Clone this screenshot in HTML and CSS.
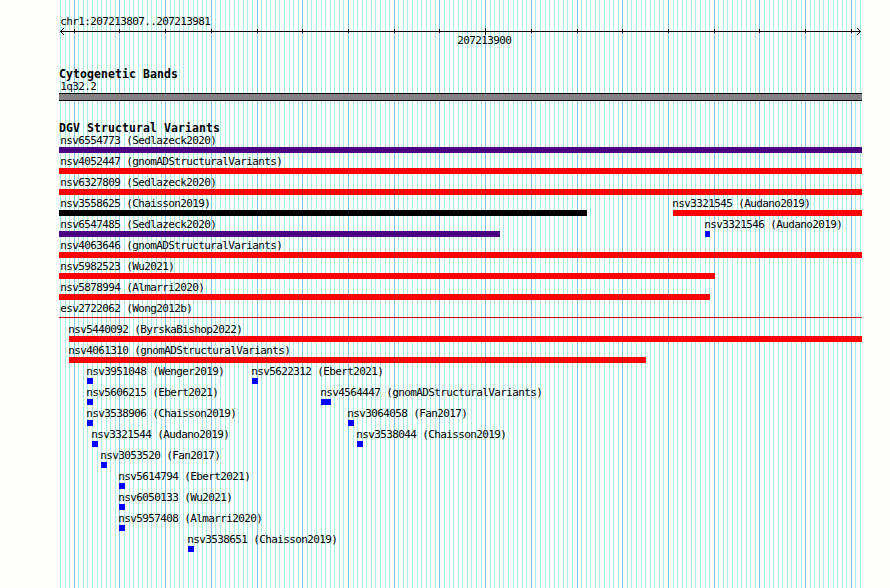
FILE: index.html
```
<!DOCTYPE html>
<html lang="en">
<head>
  <meta charset="UTF-8">
  <title>chr1:207213807..207213981</title>
  <link rel="stylesheet" href="styles.css">
</head>
<body>
  <div class="browser">

    <!-- Scale -->
    <div class="scale">
      <div class="region">chr1:207213807..207213981</div>
      <svg class="ruler" width="803" height="8" viewBox="59 28 803 8" shape-rendering="crispEdges">
        <path class="stroke" d="M60 31.5H861M74.5 29v4M119.5 29v4M165.5 29v4M211.5 29v4M257.5 29v4M302.5 29v4M348.5 29v4M394.5 29v4M439.5 29v4M485.5 28v7M531.5 29v4M577.5 29v4M622.5 29v4M668.5 29v4M714.5 29v4M759.5 29v4M805.5 29v4M851.5 29v4"/>
        <path d="M60 31h1v1h-1zM61 30h1v1h-1zM62 29h1v1h-1zM63 28h1v1h-1zM61 32h1v1h-1zM62 33h1v1h-1zM63 34h1v1h-1z"/>
        <path d="M860 31h1v1h-1zM859 30h1v1h-1zM858 29h1v1h-1zM857 28h1v1h-1zM859 32h1v1h-1zM858 33h1v1h-1zM857 34h1v1h-1z"/>
      </svg>
      <div class="position">207213900</div>
    </div>

    <!-- Cytogenetic bands -->
    <div class="track bands">
      <h2>Cytogenetic Bands</h2>
      <div class="band-label">1q32.2</div>
      <div class="band"></div>
    </div>

    <!-- Structural variants -->
    <div class="track variants">
      <h2>DGV Structural Variants</h2>
      <div class="row">
        <div class="feature full"><span>nsv6554773 (Sedlazeck2020)</span><i class="bar inversion" style="width:803px"></i></div>
      </div>
      <div class="row">
        <div class="feature full"><span>nsv4052447 (gnomADStructuralVariants)</span><i class="bar loss" style="width:803px"></i></div>
      </div>
      <div class="row">
        <div class="feature full"><span>nsv6327809 (Sedlazeck2020)</span><i class="bar loss" style="width:803px"></i></div>
      </div>
      <div class="row">
        <div class="feature full"><span>nsv3558625 (Chaisson2019)</span><i class="bar complex" style="width:528px"></i></div>
        <div class="feature" style="margin-left:614px"><span>nsv3321545 (Audano2019)</span><i class="bar loss" style="width:189px"></i></div>
      </div>
      <div class="row">
        <div class="feature full"><span>nsv6547485 (Sedlazeck2020)</span><i class="bar inversion" style="width:441px"></i></div>
        <div class="feature" style="margin-left:646px"><span>nsv3321546 (Audano2019)</span><i class="bar gain" style="width:5px"></i></div>
      </div>
      <div class="row">
        <div class="feature full"><span>nsv4063646 (gnomADStructuralVariants)</span><i class="bar loss" style="width:803px"></i></div>
      </div>
      <div class="row">
        <div class="feature full"><span>nsv5982523 (Wu2021)</span><i class="bar loss" style="width:656px"></i></div>
      </div>
      <div class="row">
        <div class="feature full"><span>nsv5878994 (Almarri2020)</span><i class="bar loss" style="width:651px"></i></div>
      </div>
      <div class="row">
        <div class="feature full"><span>esv2722062 (Wong2012b)</span><i class="bar thin" style="width:803px"></i></div>
      </div>
      <div class="row">
        <div class="feature" style="margin-left:10px"><span>nsv5440092 (ByrskaBishop2022)</span><i class="bar loss" style="width:793px"></i></div>
      </div>
      <div class="row">
        <div class="feature" style="margin-left:10px"><span>nsv4061310 (gnomADStructuralVariants)</span><i class="bar loss" style="width:577px"></i></div>
      </div>
      <div class="row">
        <div class="feature" style="margin-left:28px"><span>nsv3951048 (Wenger2019)</span><i class="bar gain"></i></div>
        <div class="feature" style="margin-left:193px"><span>nsv5622312 (Ebert2021)</span><i class="bar gain"></i></div>
      </div>
      <div class="row">
        <div class="feature" style="margin-left:28px"><span>nsv5606215 (Ebert2021)</span><i class="bar gain"></i></div>
        <div class="feature" style="margin-left:262px"><span>nsv4564447 (gnomADStructuralVariants)</span><i class="bar gain" style="width:10px"></i></div>
      </div>
      <div class="row">
        <div class="feature" style="margin-left:28px"><span>nsv3538906 (Chaisson2019)</span><i class="bar gain"></i></div>
        <div class="feature" style="margin-left:289px"><span>nsv3064058 (Fan2017)</span><i class="bar gain"></i></div>
      </div>
      <div class="row">
        <div class="feature" style="margin-left:33px"><span>nsv3321544 (Audano2019)</span><i class="bar gain"></i></div>
        <div class="feature" style="margin-left:298px"><span>nsv3538044 (Chaisson2019)</span><i class="bar gain"></i></div>
      </div>
      <div class="row">
        <div class="feature" style="margin-left:42px"><span>nsv3053520 (Fan2017)</span><i class="bar gain"></i></div>
      </div>
      <div class="row">
        <div class="feature" style="margin-left:60px"><span>nsv5614794 (Ebert2021)</span><i class="bar gain"></i></div>
      </div>
      <div class="row">
        <div class="feature" style="margin-left:60px"><span>nsv6050133 (Wu2021)</span><i class="bar gain"></i></div>
      </div>
      <div class="row">
        <div class="feature" style="margin-left:60px"><span>nsv5957408 (Almarri2020)</span><i class="bar gain"></i></div>
      </div>
      <div class="row">
        <div class="feature" style="margin-left:129px"><span>nsv3538651 (Chaisson2019)</span><i class="bar gain"></i></div>
      </div>
    </div>

  </div>
</body>
</html>
```
FILE: styles.css
```
* {
  box-sizing: border-box;
}

body {
  margin: 0;
  background: #fdfffc;
  color: #000;
  font-family: "DejaVu Sans Mono", monospace;
  font-size: 11px;
  line-height: 14px;
  letter-spacing: -0.622px;
  overflow: hidden;
}

.browser {
  --minor: #a5ecea;
  --major: #7cc5ee;
  width: 803px;
  height: 588px;
  margin-left: 59px;
  padding-top: 15px;
  /* one line per base, darker every ten bases (320px = 70 bases) */
  background:
    repeating-linear-gradient(90deg,
      transparent 0 14px, var(--major) 14px 15px,
      transparent 15px 59px, var(--major) 59px 60px,
      transparent 60px 105px, var(--major) 105px 106px,
      transparent 106px 151px, var(--major) 151px 152px,
      transparent 152px 197px, var(--major) 197px 198px,
      transparent 198px 242px, var(--major) 242px 243px,
      transparent 243px 288px, var(--major) 288px 289px,
      transparent 289px 320px) 1px 0 / 801px 100% no-repeat,
    repeating-linear-gradient(90deg,
      var(--minor) 0 1px, transparent 1px 5px,
      var(--minor) 5px 6px, transparent 6px 9px,
      var(--minor) 9px 10px, transparent 10px 14px,
      var(--minor) 14px 15px, transparent 15px 18px,
      var(--minor) 18px 19px, transparent 19px 23px,
      var(--minor) 23px 24px, transparent 24px 27px,
      var(--minor) 27px 28px, transparent 28px 32px) 1px 0 / 801px 100% no-repeat;
}

.scale {
  height: 53px;
}

.region {
  height: 13px;
  padding-left: 1.2px;
}

.ruler {
  display: block;
}

.stroke {
  fill: none;
  stroke: #000;
}

.position {
  margin-top: -2px;
  padding-left: 398.2px;
}

.track h2 {
  margin: 0;
  height: 12px;
  font-size: 11.5px;
  line-height: 12px;
  letter-spacing: 0.077px;
}

.bands {
  height: 54px;
}

.band-label {
  height: 13px;
  padding-left: 1.2px;
}

.band {
  height: 8px;
  background: #848284;
  border: solid #000;
  border-width: 1px 0;
}

.row {
  display: grid;
  height: 21px;
}

.feature {
  grid-area: 1 / 1;
  white-space: nowrap;
}

.feature span {
  display: block;
  height: 13px;
  margin-left: -0.8px;
}

.feature.full span {
  margin-left: 1.2px;
}

.bar {
  display: block;
  width: 6px;
  height: 6px;
}

.loss {
  background: #f00;
}

.gain {
  background: #00f;
}

.inversion {
  background: #4b0082;
}

.complex {
  background: #000;
}

.thin {
  height: 1px;
  margin-top: 2px;
  background: #dc0014;
}
```
